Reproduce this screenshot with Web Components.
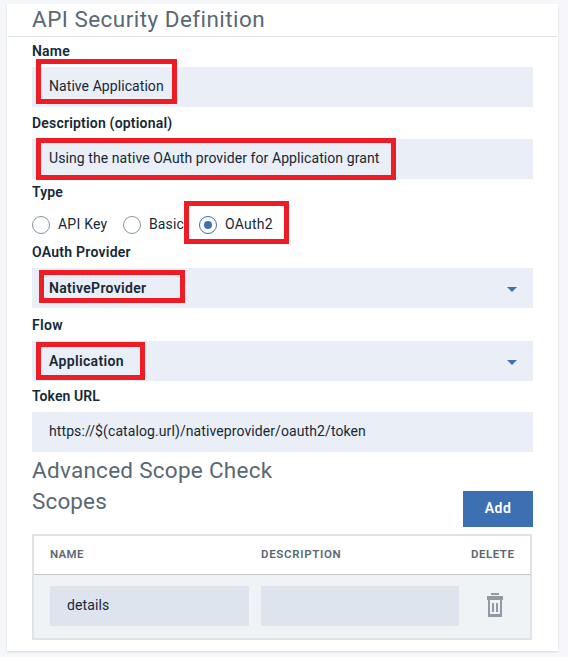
<!DOCTYPE html>
<html lang="en">
<head>
<meta charset="utf-8">
<title>API Security Definition</title>
<style>
html, body { margin: 0; background: #fff; }
body { font-family: Roboto, "Noto Sans", sans-serif; font-size: 14px; line-height: 20px; color: #152935; width: 572px; height: 662px; overflow: hidden; }
</style>
</head>
<body>
<security-page></security-page>
<script>
const define = (name, html, ready) => {
  const template = document.createElement('template');
  template.innerHTML = html;
  customElements.define(name, class extends HTMLElement {
    connectedCallback() {
      if (this.shadowRoot) return;
      this.attachShadow({ mode: 'open' }).append(template.content.cloneNode(true));
      if (ready) ready(this);
    }
  });
};

// Text tracked out to a given advance width.
define('tracked-text', `<style>:host{display:inline-block;white-space:pre}</style><slot></slot>`, el => {
  const chars = el.textContent.length;
  const natural = el.getBoundingClientRect().width;
  el.style.letterSpacing = ((+el.getAttribute('width') - 0.6 - natural) / chars).toFixed(3) + 'px';
});

// Red annotation frame, laid over the content it calls out.
define('call-out', `<style>
  :host{position:absolute;box-sizing:border-box;border:5px solid #ee1c25;pointer-events:none}
</style>`);

define('field-label', `<style>
  :host{display:block;font-weight:600;height:20px;margin-bottom:6px}
</style><slot></slot>`);

define('text-field', `<style>
  :host{display:flex;align-items:center;position:relative;box-sizing:border-box;height:40px;padding:0 17px 2px;background:var(--field,#eaeef6)}
</style><slot></slot>`);

define('select-field', `<style>
  :host{display:flex;align-items:center;justify-content:space-between;position:relative;box-sizing:border-box;height:40px;padding:0 16px 0 17px;background:#eaeef6;font-weight:600}
  svg{display:block;margin-top:3px}
</style><slot></slot><svg width="10" height="5" viewBox="0 0 10 5"><path d="M0 0h10L5 5z" fill="#3d70b2"/></svg>`);

define('radio-option', `<style>
  :host{display:flex;align-items:center;gap:8px;height:18px;position:relative}
  i{box-sizing:border-box;width:18px;height:18px;border:1px solid #8897a2;border-radius:50%;display:grid;place-items:center}
  :host([checked]) i{border-color:#3d70b2}
  :host([checked]) i::after{content:"";width:8px;height:8px;border-radius:50%;background:#3d70b2}
  slot{display:block;margin-top:-2px}
</style><i></i><slot></slot>`);

define('section-title', `<style>
  :host{display:block;font-size:22.5px;line-height:31px;height:31px;color:#5a6872}
</style><slot></slot>`);

define('add-button', `<style>
  :host{display:flex;align-items:center;justify-content:center;box-sizing:border-box;width:70px;height:36px;padding-bottom:2px;background:#3d70b2;color:#fff;font-weight:600}
</style><slot></slot>`);

define('trash-icon', `<style>:host{display:block;width:16px;height:24px}svg{display:block}</style>
<svg width="16" height="24" viewBox="0 0 16 24" fill="#8c9ba7" shape-rendering="crispEdges">
  <path d="M4 0h8v2H4zM0 3h16v4H0zM1 7h2v14h10V7h2v17H1zM5 10h2v9H5zM9 10h2v9H9z"/>
</svg>`);

define('scope-table', `<style>
  :host{display:block;box-sizing:border-box;width:500px;height:106px;border:2px solid #dfe3e6}
  .row{display:grid;grid-template-columns:199px 198px 1fr;column-gap:12px;align-items:center;padding-left:16px}
  .head{box-sizing:border-box;height:39px;border-bottom:1px solid #c4c6c8;font-size:11.5px;font-weight:600;color:#5a6872;padding-bottom:2px}
  .body{box-sizing:border-box;height:63px;padding-bottom:1px;background:#eff3f6;--field:#dee4ee}
  trash-icon{margin:-2px 0 0 16px}
</style>
<div class="row head">
  <div><tracked-text width="34.3">NAME</tracked-text></div>
  <div><tracked-text width="81">DESCRIPTION</tracked-text></div>
  <div><tracked-text width="44">DELETE</tracked-text></div>
</div>
<div class="row body">
  <text-field><tracked-text width="43">details</tracked-text></text-field>
  <text-field></text-field>
  <trash-icon></trash-icon>
</div>`);

define('security-page', `<style>
  :host{display:block;box-sizing:border-box;width:568px;height:657px;padding:4px 10px 6px 7px;background:#f5f7fb}
  .card{box-sizing:border-box;height:647px;background:#fff;box-shadow:0 1px 2px rgba(0,0,0,.12)}
  header{box-sizing:border-box;height:33px;margin:0 1px;padding-left:24px;border-bottom:1px solid #dfe3e6}
  main{padding:4px 25px 0;display:flex;flex-direction:column}
  .radios{display:flex;height:18px;margin:8px 0}
  .scopes{display:flex;justify-content:space-between;align-items:flex-start;height:48px}
  add-button{margin-top:5px}
</style>
<div class="card">
  <header><section-title><tracked-text width="233">API Security Definition</tracked-text></section-title></header>
  <main>
    <field-label><tracked-text width="38.5">Name</tracked-text></field-label>
    <text-field><tracked-text width="115.3">Native Application</tracked-text><call-out style="left:4px;top:-8px;width:141px;height:45px"></call-out></text-field>
    <field-label style="margin-top:6px"><tracked-text width="141">Description (optional)</tracked-text></field-label>
    <text-field><tracked-text width="331">Using the native OAuth provider for Application grant</tracked-text><call-out style="left:4px;top:-1px;width:360px;height:42px"></call-out></text-field>
    <field-label style="margin-top:3px"><tracked-text width="31.5">Type</tracked-text></field-label>
    <div class="radios">
      <radio-option style="width:91px"><tracked-text width="50">API Key</tracked-text></radio-option>
      <radio-option style="width:76px"><tracked-text width="35.5">Basic</tracked-text></radio-option>
      <radio-option checked><tracked-text width="48.5">OAuth2</tracked-text><call-out style="left:-15px;top:-15px;width:105px;height:43px"></call-out></radio-option>
    </div>
    <field-label><tracked-text width="99.5">OAuth Provider</tracked-text></field-label>
    <select-field><tracked-text width="98">NativeProvider</tracked-text><call-out style="left:7px;top:2px;width:146px;height:33px"></call-out></select-field>
    <field-label style="margin-top:7px"><tracked-text width="31.5">Flow</tracked-text></field-label>
    <select-field><tracked-text width="75.5">Application</tracked-text><call-out style="left:4px;top:1px;width:109px;height:38px"></call-out></select-field>
    <field-label style="margin-top:5px"><tracked-text width="68.5">Token URL</tracked-text></field-label>
    <text-field><tracked-text width="317.5">https://$(catalog.url)/nativeprovider/oauth2/token</tracked-text></text-field>
    <section-title style="margin-top:3px"><tracked-text width="241">Advanced Scope Check</tracked-text></section-title>
    <div class="scopes">
      <section-title><tracked-text width="75.5">Scopes</tracked-text></section-title>
      <add-button><tracked-text width="27">Add</tracked-text></add-button>
    </div>
    <scope-table></scope-table>
  </main>
</div>`);
</script>
</body>
</html>
